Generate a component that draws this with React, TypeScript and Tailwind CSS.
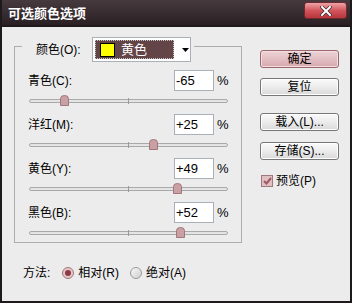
import { useState } from "react";

const rows = [
  { label: "青色(C):", value: -65 },
  { label: "洋红(M):", value: 25 },
  { label: "黄色(Y):", value: 49 },
  { label: "黑色(B):", value: 52 },
];

function fmt(v: number) {
  return v > 0 ? "+" + v : String(v);
}

function Slider({ value }: { value: number }) {
  // track is 199px wide, -100..+100
  const left = Math.round(((value + 100) / 200) * 199);
  return (
    <div className="relative ml-[14px] w-[199px] h-[13px]">
      <div className="absolute left-0 right-0 top-[8px] h-[4px] rounded-full border border-[#a9a9a9] bg-[#e4e4e4]" />
      <div className="absolute left-[99px] top-[7px] w-px h-[6px] bg-[#9a9a9a]" />
      <svg
        className="absolute top-[4px]"
        style={{ left: left - 4 }}
        width="9"
        height="11"
        viewBox="0 0 9 11"
      >
        <path d="M0.5 10.5 V3.5 Q0.5 0.5 4.5 0.5 Q8.5 0.5 8.5 3.5 V10.5 Z" fill="#caa0a5" stroke="#a0777c" />
      </svg>
    </div>
  );
}

function Button({ children, primary = false }: { children: React.ReactNode; primary?: boolean }) {
  return (
    <div
      className={
        primary
          ? "h-[18px] w-[79px] rounded-[3px] border border-[#9a666c] bg-gradient-to-b from-[#eed3d6] to-[#d6a9ae] shadow-[inset_0_0_0_1px_#f3dfe1] flex items-center justify-center text-[12px] text-black"
          : "h-[18px] w-[79px] rounded-[3px] border border-[#777777] bg-gradient-to-b from-[#fafafa] via-[#ececec] to-[#d9d9d9] shadow-[inset_0_0_0_1px_#ffffff] flex items-center justify-center text-[12px] text-black"
      }
    >
      {children}
    </div>
  );
}

export default function App() {
  const [relative, setRelative] = useState(true);

  return (
    <div className="w-[352px] h-[303px] bg-[#1e1a1c] flex flex-col px-[2px] pb-[2px] font-['Liberation_Sans','Noto_Sans_CJK_SC',sans-serif] text-[12px] leading-none select-none">
      {/* Title bar */}
      <div className="h-[25px] flex justify-between bg-gradient-to-b from-[#473a3f] to-[#2a2024] pl-[6px] pr-[3px]">
        <span className="mt-[7px] text-[13px] font-bold text-white">可选颜色选项</span>
        <div className="mt-[2px] w-[43px] h-[17px] rounded-[3px] border border-[#6e2a2f] bg-gradient-to-b from-[#eca2a6] via-[#d2555c] to-[#b8353c] flex items-center justify-center">
          <svg width="12" height="10" viewBox="0 0 12 10">
            <path d="M2 1 L10 9 M10 1 L2 9" stroke="#3b2a2d" strokeWidth="3.4" strokeLinecap="square" />
            <path d="M2 1 L10 9 M10 1 L2 9" stroke="#ffffff" strokeWidth="2" strokeLinecap="square" />
          </svg>
        </div>
      </div>
      <div className="h-[2px] bg-[#1e1a1c]" />

      {/* Body */}
      <div className="flex-1 bg-[#ececec] flex">
        {/* Left column */}
        <div className="pl-[12px] flex flex-col">
          <div className="mt-[19px] w-[228px] h-[197px] border border-[#adadad] flex flex-col">
            <div className="-mt-[10px] ml-[7px] self-start flex items-center bg-[#ececec] pr-[3px]">
              <span className="w-[70px] pl-[14px] text-black">颜色(O):</span>
              <div className="h-[25px] w-[99px] border border-[#a9b0b8] bg-white flex items-center pl-[2px]">
                <div className="h-[19px] w-[79px] bg-[#634447] border border-dotted border-[#c8c8c8] flex items-center pl-[4px]">
                  <div className="w-[15px] h-[14px] bg-[#ffff00] border border-black" />
                  <span className="ml-[6px] text-white text-[13px]">黄色</span>
                </div>
                <svg className="ml-[8px]" width="7" height="4" viewBox="0 0 7 4">
                  <path d="M0 0 H7 L3.5 4 Z" fill="#000" />
                </svg>
              </div>
            </div>

            <div className="mt-[8px] flex flex-col gap-[10px]">
              {rows.map((r) => (
                <div key={r.label} className="flex flex-col">
                  <div className="h-[21px] flex items-center">
                    <span className="w-[159px] pl-[13px] text-black">{r.label}</span>
                    <div className="w-[40px] h-[21px] border border-[#a9b0b8] bg-white flex items-center pl-[1px] text-[13px] text-black">
                      {fmt(r.value)}
                    </div>
                    <span className="ml-[3px] text-[13px] text-black">%</span>
                  </div>
                  <Slider value={r.value} />
                </div>
              ))}
            </div>
          </div>

          {/* Method */}
          <div className="mt-[22px] ml-[9px] h-[16px] flex items-center text-black">
            <span>方法:</span>
            <button onClick={() => setRelative(true)} className="ml-[12px] flex items-center gap-[4px]">
              <span
                className={
                  relative
                    ? "w-[12px] h-[12px] rounded-full border border-[#a0777c] bg-[#e7c6c9] flex items-center justify-center"
                    : "w-[12px] h-[12px] rounded-full border border-[#9a9a9a] bg-gradient-to-br from-[#f8f8f8] to-[#cfcfcf]"
                }
              >
                {relative && <span className="w-[6px] h-[6px] rounded-full bg-[#8c3b44]" />}
              </span>
              <span>相对(R)</span>
            </button>
            <button onClick={() => setRelative(false)} className="ml-[11px] flex items-center gap-[4px]">
              <span
                className={
                  !relative
                    ? "w-[12px] h-[12px] rounded-full border border-[#a0777c] bg-[#e7c6c9] flex items-center justify-center"
                    : "w-[12px] h-[12px] rounded-full border border-[#9a9a9a] bg-gradient-to-br from-[#f8f8f8] to-[#cfcfcf]"
                }
              >
                {!relative && <span className="w-[6px] h-[6px] rounded-full bg-[#8c3b44]" />}
              </span>
              <span>绝对(A)</span>
            </button>
          </div>
        </div>

        {/* Right column */}
        <div className="ml-[18px] pt-[23px] flex flex-col">
          <Button primary>确定</Button>
          <div className="mt-[10px]">
            <Button>复位</Button>
          </div>
          <div className="mt-[17px]">
            <Button>载入(L)...</Button>
          </div>
          <div className="mt-[11px]">
            <Button>存储(S)...</Button>
          </div>
          <div className="mt-[15px] ml-px flex items-center gap-[3px] text-black">
            <div className="w-[12px] h-[12px] border border-[#a0777c] bg-[#e2bfc3] flex items-center justify-center">
              <svg width="9" height="8" viewBox="0 0 9 8">
                <path d="M1 4 L3.5 6.5 L8 1" stroke="#9c5a62" strokeWidth="2" fill="none" />
              </svg>
            </div>
            <span>预览(P)</span>
          </div>
        </div>
      </div>
    </div>
  );
}
